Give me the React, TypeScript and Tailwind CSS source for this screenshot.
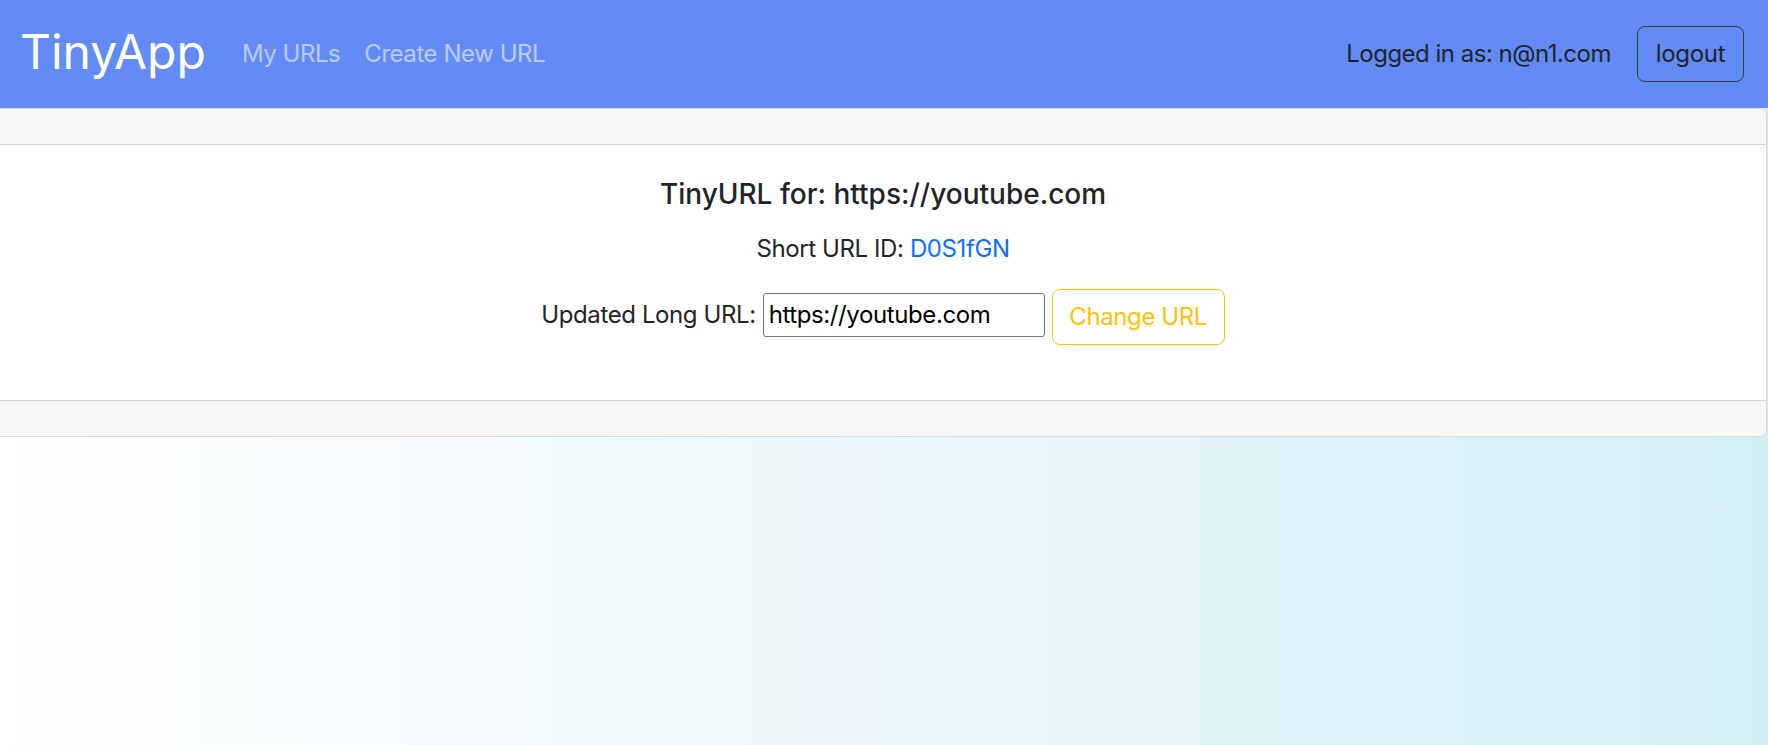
export default function App() {
  return (
    <div className="min-h-screen bg-gradient-to-r from-white via-[#ecf7fb] to-[#d3edf4] font-['Inter','Liberation_Sans',sans-serif] text-[#212529]">
      {/* Navbar */}
      <nav className="h-[108px] bg-[#628bf5] flex items-center pl-5 pr-6">
        <a className="text-[48px] leading-none text-white -mt-1 mr-6">TinyApp</a>
        <div className="flex items-center text-[24px] tracking-[-0.45px] text-white/55">
          <a className="px-3">My URLs</a>
          <a className="px-3">Create New URL</a>
        </div>
        <div className="ml-auto flex items-center gap-[26px]">
          <span className="text-[24px] tracking-[-0.5px] text-[#212529]">Logged in as: n@n1.com</span>
          <button className="h-[56px] w-[107px] border border-[#343a40] rounded-[8px] text-[24px] tracking-[-0.3px] text-[#212529]">
            logout
          </button>
        </div>
      </nav>

      {/* Card */}
      <div className="mr-px bg-white border border-l-0 border-black/[.15] rounded-r-[7px]">
        <div className="h-[36px] bg-[#f7f7f7] border-b border-black/[.15] rounded-tr-[7px]" />
        <div className="h-[255px] flex flex-col items-center pt-8">
          <h5 className="text-[28px] leading-[34px] font-medium">
            TinyURL for: https://youtube.com
          </h5>
          <p className="mt-[20px] text-[24px] leading-[36px] tracking-[-0.4px]">
            Short URL ID: <a className="text-[#0d6efd]">D0S1fGN</a>
          </p>
          <form className="mt-[17px] flex items-center text-[24px] tracking-[-0.4px]">
            <label className="mr-[7px]">Updated Long URL:</label>
            <input
              defaultValue="https://youtube.com"
              className="w-[282px] h-[44px] px-[5px] border border-[#767676] rounded-[3px] text-black tracking-[-0.4px] outline-none"
            />
            <button
              type="button"
              className="ml-[7px] mt-[5px] h-[56px] w-[173px] border border-[#ffc107] rounded-[8px] text-[#ffc107]"
            >
              Change URL
            </button>
          </form>
        </div>
        <div className="h-[36px] bg-[#f7f7f7] border-t border-black/[.15] rounded-br-[7px]" />
      </div>
    </div>
  );
}
